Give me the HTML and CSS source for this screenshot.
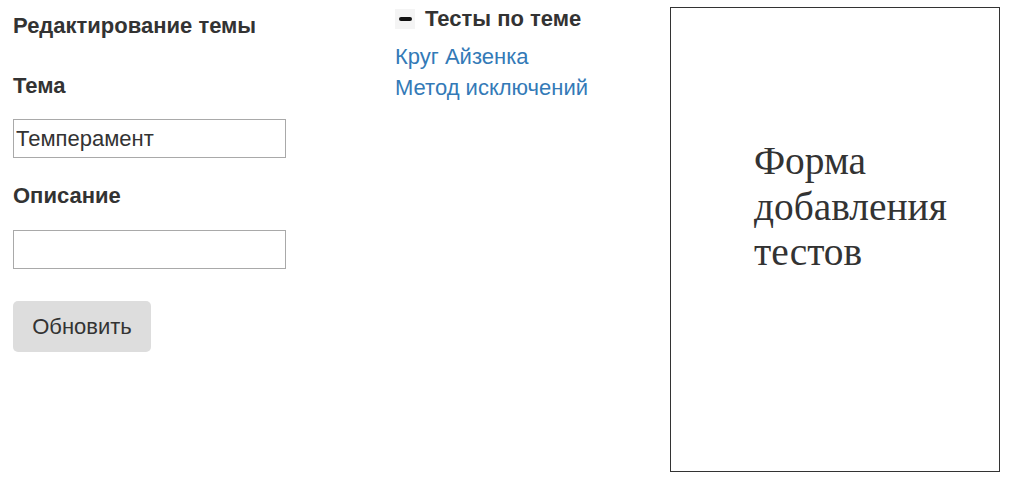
FILE: index.html
```html
<!DOCTYPE html>
<html lang="ru">
<head>
<meta charset="utf-8">
<title>Редактирование темы</title>
<link rel="stylesheet" href="styles.css">
</head>
<body>
<div class="page">
  <form class="edit">
    <h2 class="title">Редактирование темы</h2>
    <label class="label">Тема</label>
    <input class="field" type="text" value="Темперамент">
    <label class="label label-desc">Описание</label>
    <input class="field field-desc" type="text" value="">
    <button class="btn" type="button">Обновить</button>
  </form>
  <div class="tests">
    <div class="tests-head">
      <span class="toggle"><span class="toggle-bar"></span></span>
      <span class="tests-title">Тесты по теме</span>
    </div>
    <ul class="tests-list">
      <li><a href="#">Круг Айзенка</a></li>
      <li><a href="#">Метод исключений</a></li>
    </ul>
  </div>
  <div class="addbox">
    <p class="addbox-text">Форма добавления тестов</p>
  </div>
</div>
</body>
</html>
```

FILE: styles.css
```css
html, body {
  margin: 0;
  padding: 0;
  background: #fff;
}
body {
  font-family: "Liberation Sans", Arial, sans-serif;
  color: #333;
}
.page {
  display: flex;
  align-items: flex-start;
  padding-left: 13px;
}
.edit {
  width: 273px;
  padding-top: 16px;
  display: flex;
  flex-direction: column;
  align-items: flex-start;
}
.title {
  margin: 0;
  font-size: 22px;
  line-height: 20px;
  font-weight: bold;
}
.label {
  display: block;
  margin-top: 40px;
  font-size: 22px;
  line-height: 20px;
  font-weight: bold;
}
.label-desc {
  margin-top: 28px;
}
.field {
  box-sizing: border-box;
  width: 273px;
  height: 39px;
  margin-top: 23px;
  padding: 0 2px;
  border: 1px solid #a9a9a9;
  font-family: "Liberation Sans", Arial, sans-serif;
  font-size: 22px;
  color: #333;
  background: #fff;
}
.field-desc {
  margin-top: 24px;
}
.btn {
  margin-top: 32px;
  width: 138px;
  height: 51px;
  border: none;
  border-radius: 5px;
  background: #dddddd;
  font-family: "Liberation Sans", Arial, sans-serif;
  font-size: 22px;
  color: #333;
  padding: 0;
}
.tests {
  margin-left: 109px;
  width: 275px;
  padding-top: 9px;
}
.tests-head {
  display: flex;
  align-items: center;
  height: 20px;
  gap: 10px;
}
.toggle {
  width: 20px;
  height: 20px;
  background: #f4f4f4;
  display: flex;
  align-items: center;
  justify-content: center;
}
.toggle-bar {
  width: 13px;
  height: 4px;
  border-radius: 2px;
  background: #111;
}
.tests-title {
  font-size: 22px;
  font-weight: bold;
  line-height: 20px;
}
.tests-list {
  list-style: none;
  margin: 12px 0 0;
  padding: 0;
  font-size: 22px;
  line-height: 31px;
}
.tests-list a {
  color: #337ab7;
  text-decoration: none;
}
.addbox {
  box-sizing: border-box;
  width: 330px;
  height: 465px;
  margin-top: 7px;
  border: 1px solid #333;
  padding: 131px 20px 0 83px;
}
.addbox-text {
  margin: 0;
  font-family: "Liberation Serif", "Times New Roman", serif;
  font-size: 39.4px;
  line-height: 45.5px;
  color: #333;
}
```
